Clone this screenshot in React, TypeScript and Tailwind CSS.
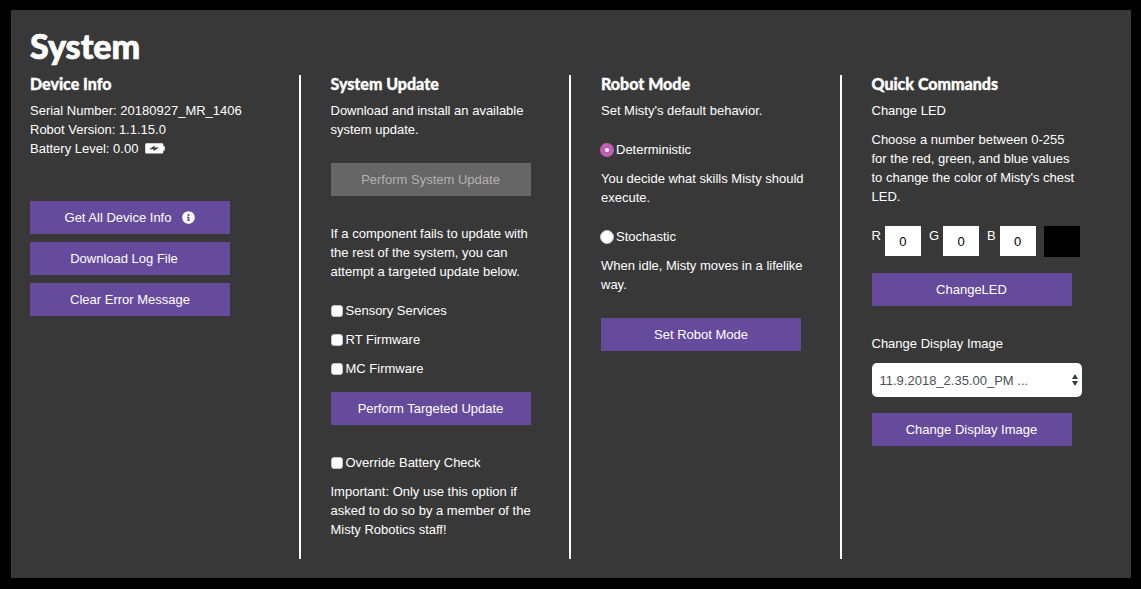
import { useState } from "react";
import type { ButtonHTMLAttributes, ReactNode } from "react";

function Column({ title, className, children }: { title: string; className: string; children: ReactNode }) {
  return (
    <section className={className}>
      <h2 className="mb-2 font-['Lato',sans-serif] text-base leading-[18px] font-black [-webkit-text-stroke:thin_white]">{title}</h2>
      {children}
    </section>
  );
}

function ActionButton({ className = "", children, ...rest }: ButtonHTMLAttributes<HTMLButtonElement>) {
  return (
    <button
      type="button"
      className={`flex h-[33px] w-[200px] items-center justify-center bg-[#664a9c] text-white disabled:bg-[#666666] disabled:text-[#b2b2b2] ${className}`}
      {...rest}
    >
      {children}
    </button>
  );
}

function CheckRow({ label, className = "" }: { label: string; className?: string }) {
  return (
    <label className={`flex items-center gap-[3px] ${className}`}>
      <input
        type="checkbox"
        className="h-3 w-3 appearance-none rounded-[3px] border border-[#c4c4c4] bg-white checked:bg-[#bf5fb4]"
      />
      {label}
    </label>
  );
}

function RadioRow({ label, defaultChecked }: { label: string; defaultChecked?: boolean }) {
  return (
    <label className="-ml-px mt-5 flex items-center gap-0.5">
      <input
        type="radio"
        name="robot-mode"
        defaultChecked={defaultChecked}
        className="h-3.5 w-3.5 appearance-none rounded-full border border-[#c4c4c4] bg-white checked:border-[5px] checked:border-[#bf5fb4]"
      />
      {label}
    </label>
  );
}

function ChannelInput({ label, value, onChange }: { label: string; value: string; onChange: (v: string) => void }) {
  return (
    <label className="flex items-start gap-1">
      {label}
      <input
        type="text"
        value={value}
        onChange={(e) => onChange(e.target.value)}
        className="h-[30px] w-9 bg-white text-center text-black"
      />
    </label>
  );
}

function BatteryIcon() {
  return (
    <svg width="20" height="11" viewBox="0 0 20 11" aria-hidden="true">
      <path
        fill="#fff"
        d="M1.500 0.300h15.500a1.300 1.300 0 0 1 1.300 1.300v1.500h.6a.9.9 0 0 1 .9.900v2.800a.9.9 0 0 1-.9.900h-.6v1.500a1.300 1.300 0 0 1-1.300 1.300H1.500A1.300 1.300 0 0 1 .2 9.200V1.600A1.300 1.300 0 0 1 1.500.3z"
      />
      <path fill="#383838" d="M4.200 6.200L9.700 2.600 9.300 4.500H14L8.500 8.200 8.900 6.200z" />
    </svg>
  );
}

function InfoIcon() {
  return (
    <svg width="13" height="13" viewBox="0 0 512 512" aria-hidden="true">
      <path
        fill="currentColor"
        d="M256 8C119 8 8 119.100 8 256c0 137 111 248 248 248s248-111 248-248C504 119.100 393 8 256 8zm0 110c23.200 0 42 18.800 42 42s-18.800 42-42 42-42-18.800-42-42 18.800-42 42-42zm56 254c0 6.600-5.400 12-12 12h-88c-6.600 0-12-5.400-12-12v-24c0-6.600 5.400-12 12-12h12v-64h-12c-6.600 0-12-5.400-12-12v-24c0-6.600 5.400-12 12-12h64c6.600 0 12 5.400 12 12v100h12c6.600 0 12 5.400 12 12v24z"
      />
    </svg>
  );
}

export default function App() {
  const [red, setRed] = useState("0");
  const [green, setGreen] = useState("0");
  const [blue, setBlue] = useState("0");

  return (
    <div className="min-h-screen bg-black px-[11px] py-2.5 font-['Liberation_Sans',Arial,sans-serif] text-[13px] leading-[19px] text-white">
      <main className="-mr-px bg-[#383838] p-[19px]">
        <h1 className="mb-3 font-['Lato',sans-serif] text-[34px] leading-[34px] font-black [-webkit-text-stroke:thin_white]">System</h1>
        <div className="grid grid-cols-4">
          <Column title="Device Info" className="border-r-2 border-white">
            <p>Serial Number: 20180927_MR_1406</p>
            <p>Robot Version: 1.1.15.0</p>
            <p className="flex items-center gap-[7px]">
              Battery Level: 0.00
              <BatteryIcon />
            </p>
            <div className="mt-[43px] flex flex-col gap-2">
              <ActionButton className="gap-[11px]">
                Get All Device Info
                <InfoIcon />
              </ActionButton>
              <ActionButton className="pr-3">Download Log File</ActionButton>
              <ActionButton>Clear Error Message</ActionButton>
            </div>
          </Column>

          <Column title="System Update" className="border-r-2 border-white px-[30px] pb-5">
            <p>Download and install an available system update.</p>
            <ActionButton disabled className="mt-6">
              Perform System Update
            </ActionButton>
            <p className="mt-7">
              If a component fails to update with the rest of the system, you can attempt a targeted update below.
            </p>
            <div className="mt-5 flex flex-col gap-2.5">
              <CheckRow label="Sensory Services" />
              <CheckRow label="RT Firmware" />
              <CheckRow label="MC Firmware" />
            </div>
            <ActionButton className="mt-3.5">Perform Targeted Update</ActionButton>
            <CheckRow label="Override Battery Check" className="mt-7" />
            <p className="mt-2.5">
              Important: Only use this option if asked to do so by a member of the Misty Robotics staff!
            </p>
          </Column>

          <Column title="Robot Mode" className="border-r-2 border-white px-[30px]">
            <p>Set Misty's default behavior.</p>
            <RadioRow label="Deterministic" defaultChecked />
            <p className="mt-2.5">You decide what skills Misty should execute.</p>
            <RadioRow label="Stochastic" />
            <p className="mt-2.5">When idle, Misty moves in a lifelike way.</p>
            <ActionButton className="mt-6">Set Robot Mode</ActionButton>
          </Column>

          <Column title="Quick Commands" className="px-[30px]">
            <p>Change LED</p>
            <p className="mt-2.5">
              Choose a number between 0-255 for the red, green, and blue values to change the color of Misty's chest
              LED.
            </p>
            <div className="mt-5 flex items-start gap-2">
              <ChannelInput label="R" value={red} onChange={setRed} />
              <ChannelInput label="G" value={green} onChange={setGreen} />
              <ChannelInput label="B" value={blue} onChange={setBlue} />
              <div
                className="h-[31px] w-9 shrink-0"
                style={{ backgroundColor: `rgb(${Number(red) || 0}, ${Number(green) || 0}, ${Number(blue) || 0})` }}
              />
            </div>
            <ActionButton className="mt-4">ChangeLED</ActionButton>
            <label htmlFor="display-image" className="mt-7 block">
              Change Display Image
            </label>
            <div className="mt-2.5 grid w-[210px] items-center">
              <select
                id="display-image"
                className="col-start-1 row-start-1 h-[34px] w-full appearance-none rounded-[5px] bg-white px-2 text-[#495057]"
              >
                <option>11.9.2018_2.35.00_PM ...</option>
              </select>
              <svg
                className="pointer-events-none col-start-1 row-start-1 mr-1 justify-self-end"
                width="6"
                height="12"
                viewBox="0 0 6 12"
                aria-hidden="true"
              >
                <path fill="#343a40" d="M3 0L6 5H0zM0 7h6L3 12z" />
              </svg>
            </div>
            <ActionButton className="mt-4">Change Display Image</ActionButton>
          </Column>
        </div>
      </main>
    </div>
  );
}
